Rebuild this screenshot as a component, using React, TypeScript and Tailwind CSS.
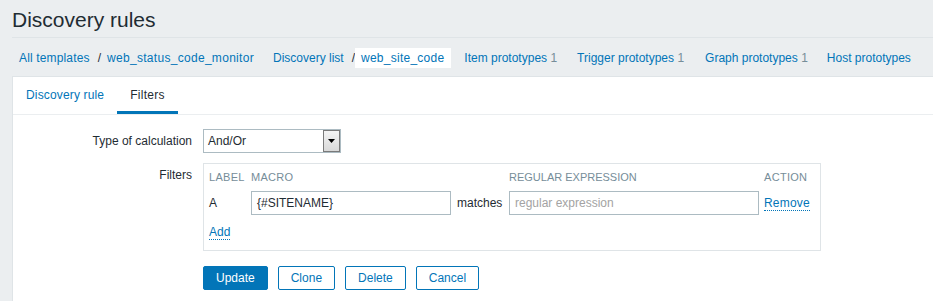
import React from "react";

const Count = ({ n }: { n: string }) => <span className="text-[#768d99]"> {n}</span>;

export default function App() {
  return (
    <div className="min-h-screen bg-[#ebeef0] font-['Liberation_Sans',Arial,sans-serif] text-[12px] text-[#1f2c33] pl-[12px] overflow-hidden">
      <header className="h-[38px] pt-[8px] border-b border-[#dfe4e7]">
        <h1 className="text-[21px] leading-[24px] font-normal">Discovery rules</h1>
      </header>

      <nav className="flex pt-[10px] pb-[8px] gap-[7px] pl-[1px] leading-[20px] whitespace-nowrap text-[#0275b8]">
        <div className="flex">
          <span className="px-[6px] tracking-[0.15px]">All templates</span>
          <span className="ml-[2px] text-[#1f2c33]">/</span>
          <span className="px-[6px] tracking-[0.3px]">web_status_code_monitor</span>
        </div>
        <div className="flex">
          <span className="px-[6px]">Discovery list</span>
          <span className="ml-[2px] text-[#1f2c33]">/</span>
          <span className="pl-[6px] pr-[7px] bg-white tracking-[0.25px]">web_site_code</span>
        </div>
        <span className="px-[6px]">Item prototypes<Count n="1" /></span>
        <span className="px-[6px] ml-[1px]">Trigger prototypes<Count n="1" /></span>
        <span className="px-[6px] ml-[2px]">Graph prototypes<Count n="1" /></span>
        <span className="px-[6px]">Host prototypes</span>
      </nav>

      <div className="bg-white border border-r-0 border-[#dfe4e7] min-h-[240px]">
        <div className="flex h-[38px] border-b border-[#ebeef0] leading-[14px]">
          <div className="px-[13px] pt-[11px] text-[#0275b8] tracking-[0.15px]">Discovery rule</div>
          <div className="px-[13px] pt-[11px] border-b-[3px] border-[#0275b8] text-[#1f2c33] tracking-[0.3px]">Filters</div>
        </div>

        <div className="grid grid-cols-[179px_1fr] gap-x-[11px] gap-y-[10px] pt-[14px] pb-[20px]">
          <div className="flex items-center justify-end h-[24px] leading-[14px]">Type of calculation</div>
          <div>
            <div className="flex items-center w-[138px] h-[24px] border border-[#acbbc2] bg-white">
              <span className="flex-1 pl-[4px] leading-[14px]">And/Or</span>
              <span className="flex items-center justify-center w-[17px] h-[22px] border border-[#7a7a7a] bg-gradient-to-b from-[#f4f4f4] to-[#d9d9d9]">
                <svg width="7" height="4" viewBox="0 0 7 4"><path d="M0 0 H7 L3.5 4 Z" fill="#000" /></svg>
              </span>
            </div>
          </div>

          <div className="text-right pt-[5px] leading-[14px]">Filters</div>
          <div>
            <div className="w-fit border border-[#dfe4e7] pl-[5px] pr-[10px] pt-[6px] pb-[11px]">
              <div className="grid grid-cols-[36px_200px_46px_250px_auto] gap-x-[6px] gap-y-[7px] items-center">
                <div className="text-[11px] leading-[14px] tracking-[0.3px] text-[#768d99]">LABEL</div>
                <div className="text-[11px] leading-[14px] tracking-[0.3px] text-[#768d99]">MACRO</div>
                <div />
                <div className="text-[11px] leading-[14px] text-[#768d99]">REGULAR EXPRESSION</div>
                <div className="text-[11px] leading-[14px] tracking-[0.3px] text-[#768d99] -ml-[1px]">ACTION</div>

                <div className="leading-[14px]">A</div>
                <div className="h-[24px] border border-[#acbbc2] px-[5px] flex items-center leading-[14px]">{"{#SITENAME}"}</div>
                <div className="leading-[14px]">matches</div>
                <div className="h-[24px] border border-[#acbbc2] px-[5px] flex items-center leading-[14px] text-[#a3a3a3]">regular expression</div>
                <div className="-ml-[1px]">
                  <span className="leading-[14px] text-[#0275b8] border-b border-dotted border-[#0275b8] tracking-[0.2px]">Remove</span>
                </div>
              </div>
              <div className="mt-[10px] leading-[14px]">
                <span className="text-[#0275b8] border-b border-dotted border-[#0275b8]">Add</span>
              </div>
            </div>
          </div>

          <div />
          <div className="flex gap-[10px] mt-[5px]">
            <button className="h-[24px] px-[12px] border border-[#0275b8] bg-[#0275b8] text-white rounded-[2px] leading-[14px]">Update</button>
            <button className="h-[24px] px-[12px] border border-[#0275b8] bg-white text-[#0275b8] rounded-[2px] leading-[14px]">Clone</button>
            <button className="h-[24px] px-[12px] border border-[#0275b8] bg-white text-[#0275b8] rounded-[2px] leading-[14px]">Delete</button>
            <button className="h-[24px] px-[12px] border border-[#0275b8] bg-white text-[#0275b8] rounded-[2px] leading-[14px]">Cancel</button>
          </div>
        </div>
      </div>
    </div>
  );
}
